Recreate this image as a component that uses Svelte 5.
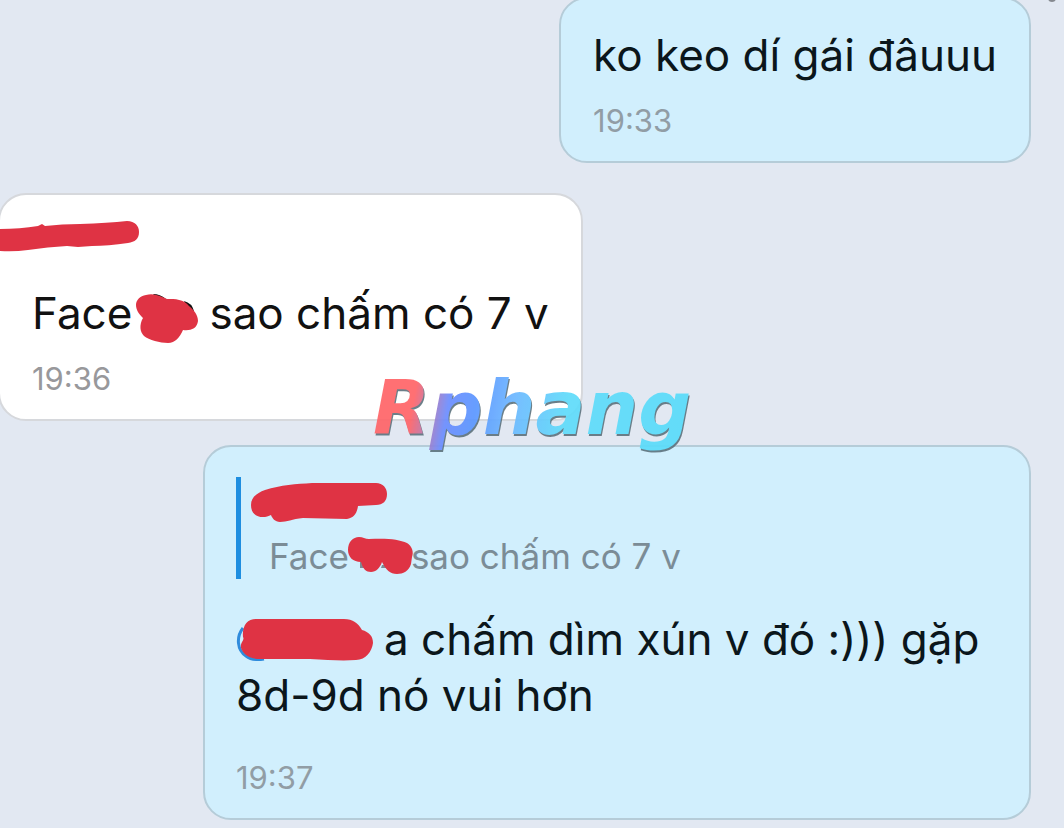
<script lang="ts">
  type Message = {
    id: number;
    mine: boolean;
    time: string;
  };

  const messages: Message[] = [
    { id: 1, mine: true, time: '19:33' },
    { id: 2, mine: false, time: '19:36' },
    { id: 3, mine: true, time: '19:37' },
  ];
</script>

{#snippet time(value: string)}
  <time class="time" datetime={value}>{value}</time>
{/snippet}

<main class="chat">
  <span class="status-dot"></span>

  <article class="bubble first" class:mine={messages[0].mine}>
    <p class="text">ko keo dí gái đâuuu</p>
    {@render time(messages[0].time)}
  </article>

  <article class="bubble" class:theirs={!messages[1].mine}>
    <svg class="sender" width="140" height="32" viewBox="0 0 140 32" aria-hidden="true">
      <path class="ink" d="M0 8 Q20 8 38 5 L42 3 L45 5 Q62 3 80 3 Q108 2 127 0 C135 0 139 5 139 11 C139 18 135 21 128 22 Q108 25 92 25 L78 26 L67 25 Q48 26 28 29 Q14 31 0 30 Z" />
    </svg>
    <p class="text">Face<svg class="mask" width="80" height="50" viewBox="129 295 80 50" aria-hidden="true">
        <path class="peek" d="M153 296 Q160 296 166 301 L158 302 Z M184 303 Q192 305 194 313 L188 312 Z" />
        <path class="ink" d="M146 297 C154 295 160 298 167 301 C175 301 184 301 189 308 C194 312 198 317 198 323 C197 331 190 333 183 332 C180 339 175 345 168 345 C160 345 149 342 144 338 C140 334 139 327 143 320 C139 316 136 312 136 307 C136 302 140 298 146 297 Z" />
      </svg>sao chấm có 7 v</p>
    {@render time(messages[1].time)}
  </article>

  <article class="bubble reply" class:mine={messages[2].mine}>
    <blockquote class="quote">
      <svg class="quote-name" width="138" height="40" viewBox="250 481 138 40" aria-hidden="true">
        <path class="ink" d="M250 504 C250 496 256 492 264 489 C280 484 295 483 311 482 L375 482 C382 482 386 487 386 493 C386 500 382 504 375 504 L357 505 C356 513 352 517 346 518 L302 517 C291 518 286 521 279 521 C274 521 271 517 270 514 C263 518 250 517 250 504 Z" />
      </svg>
      <p class="quote-text">Face<svg class="quote-mask" width="65" height="38" viewBox="346 535 65 38" aria-hidden="true">
          <path class="peek-soft" d="M360 560 h4 v7 h-4 Z M382 564 h7 v3 h-8 Z" />
          <path class="ink" d="M348 549 C348 541 353 536 359 536 C363 536 365 538 369 538 C386 537 399 538 407 542 C412 545 414 551 412 556 L411 563 C409 570 403 573 397 573 C390 573 386 569 382 561 C380 567 376 571 371 571 C366 571 363 568 361 561 C353 561 348 556 348 549 Z" />
        </svg>sao chấm có 7 v</p>
    </blockquote>
    <p class="text"><svg class="mention" width="148" height="44" viewBox="236 619 148 44" aria-hidden="true">
        <path class="ring" d="M243 629 C236 638 237 651 246 657 C251 661 258 661 264 660" />
        <path class="ink" d="M243 638 C242 627 247 620 256 620 L344 620 C353 620 358 624 362 631 C369 633 373 637 373 644 C372 652 366 661 356 661 C342 662 328 661 310 660 L257 660 C249 659 243 655 241 649 C240 643 245 641 243 638 Z" />
      </svg>a chấm dìm xún v đó :))) gặp 8d-9d nó vui hơn</p>
    {@render time(messages[2].time)}
  </article>

  <div class="watermark">Rphang</div>
</main>

<style>
  :global(body) { margin: 0; background: #e2e8f2; }
  .chat {
    position: relative;
    display: flex;
    flex-direction: column;
    min-height: 100vh;
    box-sizing: border-box;
    overflow: hidden;
    padding-right: 33px;
    font-family: Inter, 'Noto Sans', sans-serif;
    color: #0b161b;
  }
  .status-dot { position: absolute; top: -6px; right: 8px; width: 8px; height: 8px; border-radius: 50%; background: #85888f; }

  .bubble { box-sizing: border-box; border: 2px solid; border-radius: 28px; padding: 26px 32px 22px; }
  .mine { align-self: flex-end; background: #d1effd; border-color: #b5ccd8; }
  .theirs { align-self: flex-start; margin: 30px 0 24px -2px; background: #fff; border-color: #d6d8dc; color: #111; }
  .first { margin-top: -3px; padding-top: 28px; }
  .reply { width: 81%; max-width: 828px; padding: 30px 31px 22px; }

  .text { margin: 0; font-size: 44px; line-height: 56px; }
  .time { display: block; margin-top: 20px; font-size: 31px; line-height: 36px; color: #919da5; }
  .theirs .time { margin-top: 18px; color: #98989b; }
  .reply .time { margin-top: 37px; }

  .sender { display: block; margin: 0 0 32px -32px; }
  .mask, .quote-mask, .mention { overflow: visible; }
  .mask { vertical-align: -14px; margin: -10px 0 0 -3px; }
  .mention { vertical-align: -7px; }
  .ink { fill: #df3344; }
  .peek { fill: #111; }
  .peek-soft { fill: #7b8c96; }
  .ring { fill: none; stroke: #2f8bdc; stroke-width: 3; }

  .quote { margin: 0 0 32px; border-left: 5px solid #1e8ee0; padding: 5px 0 3px 10px; }
  .quote-name { display: block; margin-bottom: 14px; }
  .quote-text { margin: 0 0 0 18px; font-size: 35px; line-height: 40px; color: #7b8c96; }
  .quote-mask { vertical-align: -5px; margin: -5px 0 0 -3px; }

  .watermark {
    position: absolute;
    top: 358px;
    left: 50%;
    translate: -50% 0;
    padding: 0 8px;
    font-family: 'DejaVu Sans', sans-serif;
    font-size: 74px;
    font-weight: 700;
    font-style: italic;
    line-height: 100px;
    color: transparent;
    background: linear-gradient(100deg, #ff6468 16%, #6b8dff 26%, #5a96ff 34%, #6cb6ff 44%, #5fdcfa 60%, #58dcfa);
    background-clip: text;
    filter: drop-shadow(1px 2px 0 #5f7580);
    opacity: 0.92;
  }
</style>
